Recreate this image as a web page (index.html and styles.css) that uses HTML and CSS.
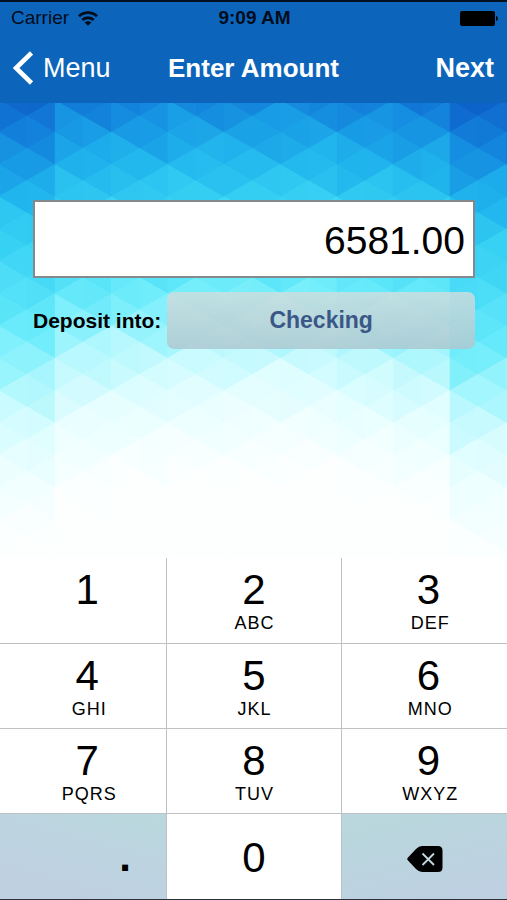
FILE: index.html
```html
<!DOCTYPE html>
<html lang="en">
<head>
<meta charset="utf-8">
<meta name="viewport" content="width=device-width, initial-scale=1">
<title>Enter Amount</title>
<link rel="stylesheet" href="styles.css">
</head>
<body>
<div class="screen">
  <header class="top">
    <div class="status">
      <div class="carrier">Carrier
        <svg class="wifi" viewBox="0 0 20 15" aria-hidden="true"><g fill="none" stroke="currentColor" stroke-width="2.8"><path d="M1 5.300C6 .4 14 .4 19 5.300"/><path d="M4.300 9c3.200-3 8.200-3 11.400 0"/></g><path d="M6.600 11.400c1.800-1.700 5-1.700 6.800 0L10 14.800z" fill="currentColor"/></svg>
      </div>
      <div class="time">9:09 AM</div>
      <svg class="battery" viewBox="0 0 38 15" aria-hidden="true"><rect width="35" height="15" rx="2"/><path d="M36 5c2.600 .8 2.600 4.200 0 5z"/></svg>
    </div>
    <nav class="bar">
      <button class="back" type="button"><svg viewBox="0 0 20 34" aria-hidden="true"><path d="M18.500 2 3 17l15.500 15" fill="none" stroke="currentColor" stroke-width="4.600"/></svg>Menu</button>
      <h1>Enter Amount</h1>
      <button class="next" type="button">Next</button>
    </nav>
  </header>
  <main class="content">
    <svg class="backdrop" viewBox="0 0 507 455" preserveAspectRatio="none" aria-hidden="true"><g id="facets"></g></svg>
    <form class="form">
      <input class="amount" type="text" inputmode="decimal" aria-label="Amount" value="6581.00">
      <div class="row">
        <label for="account">Deposit into:</label>
        <button id="account" class="account" type="button">Checking</button>
      </div>
    </form>
  </main>
  <div class="keypad">
    <button type="button" class="key outer"><b>1</b></button>
    <button type="button" class="key"><b>2</b><small>ABC</small></button>
    <button type="button" class="key outer"><b>3</b><small>DEF</small></button>
    <button type="button" class="key outer"><b>4</b><small>GHI</small></button>
    <button type="button" class="key"><b>5</b><small>JKL</small></button>
    <button type="button" class="key outer"><b>6</b><small>MNO</small></button>
    <button type="button" class="key outer"><b>7</b><small>PQRS</small></button>
    <button type="button" class="key"><b>8</b><small>TUV</small></button>
    <button type="button" class="key outer"><b>9</b><small>WXYZ</small></button>
    <button type="button" class="key point">.</button>
    <button type="button" class="key zero"><b>0</b></button>
    <button type="button" class="key delete" aria-label="Delete"><svg viewBox="0 0 36 26" aria-hidden="true"><path d="M1 14.500C0 13.500 0 12.500 1 11.500L9 3Q12 0 15 0H31Q35.500 0 35.500 4.500V21.500Q35.500 26 31 26H15Q12 26 9 23z"/><path d="m15.500 7.500 11.500 11.500M27 7.500 15.500 19" stroke="#c4d8e2" stroke-width="1.800"/></svg></button>
  </div>
</div>
<script src="backdrop.js"></script>
</body>
</html>
```
FILE: styles.css
```css
* { box-sizing: border-box; }
body {
  margin: 0;
  font-family: "Liberation Sans", Arial, sans-serif;
  color: #000;
}
button {
  margin: 0;
  padding: 0;
  border: 0;
  background: none;
  color: inherit;
  font: inherit;
}
.screen {
  display: flex;
  flex-direction: column;
  min-height: 100vh;
  border-top: 2px solid #02101f;
  border-bottom: 1px solid #2c3038;
}
.top {
  background: #0c65bb;
  padding-bottom: 6px;
}
.status {
  display: grid;
  grid-template-columns: 1fr auto 1fr;
  align-items: center;
  height: 32px;
  padding: 0 9px 0 11px;
  font-size: 19px;
  color: #020c1a;
}
.carrier { display: flex; align-items: center; gap: 9px; }
.wifi { width: 20px; height: 15px; }
.time { font-weight: bold; }
.battery { width: 38px; height: 15px; justify-self: end; fill: #000; }
.bar {
  display: grid;
  grid-template-columns: 1fr auto 1fr;
  align-items: center;
  height: 63px;
  padding: 5px 13px 0;
  font-size: 27px;
  color: #fff;
}
.bar h1 { margin: 0; font-size: 26px; }
.back { display: flex; align-items: center; gap: 10px; }
.back svg { width: 20px; height: 34px; }
.next { justify-self: end; font-weight: bold; }
.content {
  position: relative;
  flex: 1;
  background: linear-gradient(#159be5, #3bd3f4 20%, #7deffc 42%, #defeff 60%, #fdffff 76%);
}
.backdrop {
  position: absolute;
  inset: 0;
  width: 100%;
  height: 100%;
}
.form {
  position: relative;
  padding: 97px 32px 0 33px;
}
.amount {
  display: block;
  width: 100%;
  height: 78px;
  padding: 4px 8px 0;
  border: 2px solid #85898b;
  border-radius: 0;
  background: #fff;
  color: #000;
  font: 39px "Liberation Sans", Arial, sans-serif;
  text-align: right;
}
.row {
  display: flex;
  align-items: center;
  gap: 6px;
  margin-top: 14px;
}
.row label { font-size: 21px; font-weight: bold; }
.account {
  flex: 1;
  height: 57px;
  border-radius: 7px;
  background: linear-gradient(rgba(208, 222, 222, .82), rgba(172, 200, 208, .86));
  color: #3b5787;
  font-size: 23px;
  font-weight: bold;
}
.keypad {
  display: grid;
  grid-template-columns: 167fr 174fr 166fr;
  grid-template-rows: 85px 84px 84px 85px;
  gap: 1px;
  background: #bfc2c4;
}
.key {
  display: flex;
  flex-direction: column;
  align-items: center;
  padding-top: 11px;
  background: #fff;
}
.key b { font-size: 42px; line-height: 42px; font-weight: normal; }
.key small { padding-left: 1px; font-size: 18px; line-height: 24px; letter-spacing: 1px; }
.outer { padding-left: 8px; }
.outer small { padding-left: 4px; }
.key.zero { justify-content: center; padding-top: 2px; }
.key.point {
  justify-content: center;
  padding: 0 0 0 84px;
  background: linear-gradient(15deg, #bfd0e1 10%, #bdd4e0 60%, #b9d8dc);
  font-size: 42px;
  font-weight: bold;
}
.key.delete {
  justify-content: center;
  padding: 4px 0 0 2px;
  background: linear-gradient(165deg, #b9d7dc 10%, #bed0e2 90%);
}
.delete svg { width: 36px; height: 26px; }
```
FILE: backdrop.js
```js
// Faceted backdrop: a triangular lattice shaded from deep blue to white.
const W = 56.4, H = 64.6, X0 = -1.500, Y0 = 29;
const ramp = [
  [-50, 14, 98, 200], [-25, 17, 118, 214], [5, 22, 146, 226], [50, 32, 180, 237],
  [95, 54, 208, 243], [150, 82, 224, 248], [185, 110, 237, 251], [225, 168, 246, 253],
  [275, 220, 253, 255], [320, 240, 255, 255], [370, 253, 255, 255], [600, 254, 255, 255]
];
const shift = [40, 14, 7, 1, 0, 0, 10, 18, 50, 50];
function shade(x, y) {
  const col = Math.max(0, Math.min(9, Math.floor((x - X0) / W)));
  const t = y - shift[col] * (1 + Math.max(0, y - 150) / 450);
  let i = 1;
  while (i < ramp.length - 1 && ramp[i][0] < t) i++;
  const a = ramp[i - 1], b = ramp[i];
  const k = Math.max(0, Math.min(1, (t - a[0]) / (b[0] - a[0])));
  return "rgb(" + [1, 2, 3].map(n => Math.round(a[n] + (b[n] - a[n]) * k)).join() + ")";
}
function lattice(w, h, spread, attrs) {
  let out = "";
  for (let c = 0; c * w < 520; c++) {
    const x = X0 + c * w;
    for (let r = -2; r * h < 520; r++) {
      for (const side of [0, 1]) {
        // "side" picks which edge of the column the triangle stands on
        const odd = (c + side) % 2;
        const y = Y0 + r * h + odd * h / 2;
        const base = side ? x + w : x, tip = side ? x : x + w;
        const noise = Math.abs(Math.sin(c * 12.9 + r * 78.2 + side * 37.7) * 437.5) % 1;
        const fill = shade(x + w / 2, y + h / 2 + (noise - 0.5) * 2 * spread);
        out += `<polygon points="${base},${y} ${base},${y + h} ${tip},${y + h / 2}" fill="${fill}" ${attrs(fill)}/>`;
      }
    }
  }
  return out;
}
document.getElementById("facets").innerHTML =
  lattice(W, H, 8, f => `stroke="${f}" stroke-width=".6"`) +
  lattice(W / 2, H / 2, 5, () => 'opacity=".6" shape-rendering="crispEdges"');
```
